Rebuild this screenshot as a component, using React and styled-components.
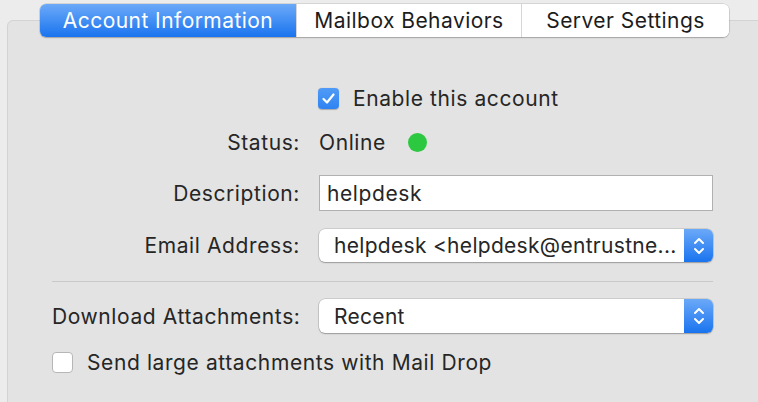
import React from 'react';
import styled, { createGlobalStyle } from 'styled-components';

const Global = createGlobalStyle`
  html, body {
    margin: 0;
    background: #ececec;
    font-family: Inter, "Helvetica Neue", "Liberation Sans", Arial, sans-serif;
    color: #262626;
    overflow: hidden;
  }
`;

const Page = styled.div`
  width: 758px;
  height: 402px;
  padding: 20px 0 0 7px;
  box-sizing: border-box;
  overflow: hidden;
`;

const Panel = styled.div`
  width: 780px;
  height: 400px;
  background: #e3e3e3;
  border: 1px solid #d3d3d3;
  border-radius: 6px;
  box-sizing: border-box;
  padding-left: 44px;
  font-size: 21px;
  letter-spacing: 0.6px;
`;

const TabBar = styled.div`
  display: flex;
  margin: -17px 0 0 -12px;
  width: fit-content;
  border-radius: 6px;
  background: #fff;
  box-shadow: 0 0 0 0.5px rgba(0, 0, 0, 0.18), 0 1px 1.5px rgba(0, 0, 0, 0.22);
  overflow: hidden;
`;

const Tab = styled.div`
  width: ${p => p.$w}px;
  height: 33px;
  box-sizing: border-box;
  display: flex;
  align-items: center;
  justify-content: center;
  letter-spacing: 0.45px;
  color: ${p => (p.$active ? '#fff' : '#1c1c1c')};
  background: ${p => (p.$active ? 'linear-gradient(#6ba9f8, #1a74ef)' : '#fff')};
  & + & {
    border-left: 1px solid #d6d6d6;
  }
`;

const Row = styled.div`
  display: grid;
  grid-template-columns: 248px 394px;
  column-gap: 19px;
  align-items: center;
  height: ${p => p.$h}px;
  margin-top: ${p => p.$top}px;
`;

const Label = styled.div`
  text-align: right;
  white-space: nowrap;
`;

const Value = styled.div`
  display: flex;
  align-items: center;
`;

const CheckLine = styled.label`
  display: flex;
  align-items: center;
  gap: 14px;
  grid-column: ${p => (p.$full ? '1 / -1' : '2')};
  margin-left: ${p => (p.$full ? 0 : -1)}px;
  white-space: nowrap;
`;

const Box = styled.span`
  width: 21px;
  height: 21px;
  flex: none;
  border-radius: 4px;
  box-sizing: border-box;
  display: flex;
  align-items: center;
  justify-content: center;
  background: ${p => (p.$on ? 'linear-gradient(#4f9bf6, #2f83f2)' : '#fff')};
  border: ${p => (p.$on ? 'none' : '1px solid #b6b6b6')};
  box-shadow: ${p => (p.$on ? '0 0.5px 1px rgba(0,0,0,0.25)' : 'none')};
`;

const Dot = styled.span`
  width: 19px;
  height: 19px;
  border-radius: 50%;
  background: #2bc840;
  margin-left: 22px;
`;

const TextField = styled.div`
  height: 36px;
  box-sizing: border-box;
  background: #fff;
  border: 1px solid #b0b0b0;
  display: flex;
  align-items: center;
  padding-left: 7px;
`;

const Popup = styled.div`
  height: ${p => p.$h}px;
  box-sizing: border-box;
  background: #fff;
  border-radius: 6px;
  box-shadow: 0 0 0 0.5px rgba(0, 0, 0, 0.2), 0 1px 1.5px rgba(0, 0, 0, 0.25);
  display: flex;
  align-items: center;
  overflow: hidden;
`;

const PopupText = styled.div`
  flex: 1;
  padding-left: 15px;
  letter-spacing: 0.3px;
  white-space: nowrap;
`;

const Stepper = styled.div`
  width: 29px;
  align-self: stretch;
  background: linear-gradient(#6ba9f8, #1a74ef);
  display: flex;
  align-items: center;
  justify-content: center;
`;

const Divider = styled.div`
  width: 661px;
  height: 1px;
  background: #c9c9c9;
  margin-top: 19px;
`;

const Check = () => (
  <svg width="15" height="15" viewBox="0 0 15 15">
    <path d="M2.5 8 L6 11.5 L12.5 3.5" fill="none" stroke="#fff" strokeWidth="2.2" strokeLinecap="round" strokeLinejoin="round" />
  </svg>
);

const Arrows = () => (
  <svg width="14" height="24" viewBox="0 0 14 24">
    <path d="M3 9 L7 5 L11 9 M3 15 L7 19 L11 15" fill="none" stroke="#fff" strokeWidth="2" strokeLinecap="round" strokeLinejoin="round" />
  </svg>
);

export default function App() {
  return (
    <Page>
      <Global />
      <Panel>
        <TabBar>
          <Tab $active $w={256}>Account Information</Tab>
          <Tab $w={225}>Mailbox Behaviors</Tab>
          <Tab $w={208}>Server Settings</Tab>
        </TabBar>

        <Row $h={24} $top={49}>
          <CheckLine>
            <Box $on><Check /></Box>
            Enable this account
          </CheckLine>
        </Row>

        <Row $h={24} $top={20}>
          <Label>Status:</Label>
          <Value>Online<Dot /></Value>
        </Row>

        <Row $h={36} $top={21}>
          <Label>Description:</Label>
          <TextField>helpdesk</TextField>
        </Row>

        <Row $h={33} $top={18}>
          <Label>Email Address:</Label>
          <Popup $h={33}>
            <PopupText>helpdesk &lt;helpdesk@entrustne...</PopupText>
            <Stepper><Arrows /></Stepper>
          </Popup>
        </Row>

        <Divider />

        <Row $h={34} $top={17}>
          <Label>Download Attachments:</Label>
          <Popup $h={34}>
            <PopupText>Recent</PopupText>
            <Stepper><Arrows /></Stepper>
          </Popup>
        </Row>

        <Row $h={24} $top={17}>
          <CheckLine $full>
            <Box />
            Send large attachments with Mail Drop
          </CheckLine>
        </Row>
      </Panel>
    </Page>
  );
}
